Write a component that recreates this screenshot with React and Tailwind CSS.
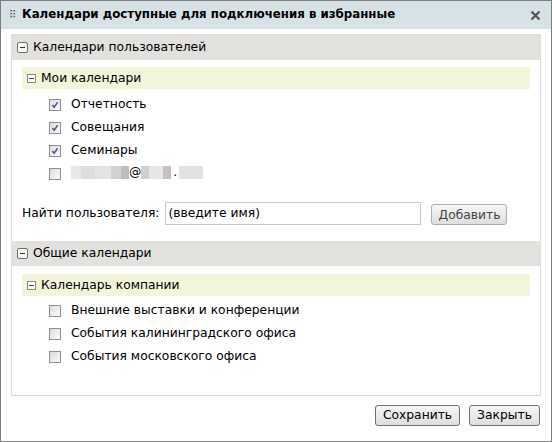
import React from "react";

const font = { fontFamily: '"DejaVu Sans", Verdana, sans-serif' };

const Minus = ({ big }) => (
  <span
    className={
      big
        ? "inline-flex items-center justify-center w-[11px] h-[11px] border border-[#6f6f6f] rounded-[2px] bg-[#f7f7f7] shrink-0"
        : "inline-flex items-center justify-center w-[9px] h-[9px] border border-[#8a8a8a] bg-white shrink-0"
    }
  >
    <span className={big ? "block w-[5px] h-px bg-[#333]" : "block w-[5px] h-px bg-[#444]"} />
  </span>
);

const Check = ({ checked }) => (
  <span className="inline-flex items-center justify-center w-[12px] h-[12px] border border-[#8e8f8f] bg-gradient-to-br from-[#dcdcdc] to-[#fbfbfb] shrink-0">
    {checked && (
      <svg width="8" height="8" viewBox="0 0 9 9">
        <path d="M1.5 4.5 L3.5 7 L7.5 1.5" fill="none" stroke="#4a5d9f" strokeWidth="1.8" />
      </svg>
    )}
  </span>
);

const Row = ({ checked, children }) => (
  <div className="flex items-center h-[23px] pl-[37px] gap-[10px]">
    <Check checked={checked} />
    <span className="text-[12.3px] text-black">{children}</span>
  </div>
);

const Blur = ({ w, c }) => <span className={"inline-block h-[13px] " + c} style={{ width: w }} />;

const Btn = ({ children, dim, w }) => (
  <button
    className={
      "h-[21px] rounded-[3px] border text-[12.3px] bg-gradient-to-b from-[#f6f6f6] to-[#dedede] " +
      (dim ? "border-[#adadad] text-[#444]" : "border-[#707070] text-black")
    }
    style={{ width: w, ...font }}
  >
    {children}
  </button>
);

export default function App() {
  return (
    <div style={font} className="w-[552px] h-[442px] border border-[#7d7d7d] bg-white flex flex-col">
      <div className="h-[28px] bg-[#d7e2e7] flex items-center pl-[8px] pr-[10px] shrink-0">
        <span className="text-[10px] text-[#555] leading-none tracking-[-1px] w-[13px]">⠿</span>
        <span className="font-bold text-[11.8px] text-black">Календари доступные для подключения в избранные</span>
        <span className="ml-auto">
          <svg width="11" height="11" viewBox="0 0 11 11">
            <path d="M1.5 1.5 L9.5 9.5 M9.5 1.5 L1.5 9.5" stroke="#555" strokeWidth="2.2" />
          </svg>
        </span>
      </div>
      <div className="mx-[10px] mt-[5px] h-[362px] border border-[#dcdcdc] flex flex-col">
        <div className="h-[25px] bg-[#e3e1de] flex items-center pl-[5px] gap-[5px]">
          <Minus big />
          <span className="text-[12.3px] text-black">Календари пользователей</span>
        </div>
        <div className="mx-[10px] mt-[7px] h-[22px] bg-[#f2f5dc] flex items-center pl-[5px] gap-[5px]">
          <Minus />
          <span className="text-[12.3px] text-black">Мои календари</span>
        </div>
        <div className="mt-[4px]">
          <Row checked>Отчетность</Row>
          <Row checked>Совещания</Row>
          <Row checked>Семинары</Row>
          <Row>
            <span className="inline-flex items-center">
              <Blur w={10} c="bg-[#e8e8e8]" />
              <Blur w={14} c="bg-[#dddddd]" />
              <Blur w={16} c="bg-[#e4e4e4]" />
              <Blur w={10} c="bg-[#d2d2d2]" />
              <Blur w={8} c="bg-[#bdbdbd]" />
              <span className="text-[12.3px]">@</span>
              <Blur w={8} c="bg-[#d0d0d0]" />
              <Blur w={14} c="bg-[#e6e6e6]" />
              <Blur w={8} c="bg-[#c7c0c0]" />
              <span className="text-[12.3px] mx-[2px]">.</span>
              <Blur w={24} c="bg-[#e2e2e2]" />
            </span>
          </Row>
        </div>
        <div className="flex items-center mt-[17px] pl-[10px] h-[23px]">
          <span className="text-[12.3px] text-black">Найти пользователя:</span>
          <div className="ml-[6px] w-[256px] h-[23px] border border-[#c8c8c8] flex items-center pl-[2px] text-[12.3px] text-black">
            (введите имя)
          </div>
          <div className="ml-[10px]">
            <Btn dim w={76}>Добавить</Btn>
          </div>
        </div>
        <div className="mt-[16px] h-[25px] bg-[#e3e1de] flex items-center pl-[5px] gap-[5px]">
          <Minus big />
          <span className="text-[12.3px] text-black">Общие календари</span>
        </div>
        <div className="mx-[10px] mt-[8px] h-[22px] bg-[#f2f5dc] flex items-center pl-[5px] gap-[5px]">
          <Minus />
          <span className="text-[12.3px] text-black">Календарь компании</span>
        </div>
        <div className="mt-[3px]">
          <Row>Внешние выставки и конференции</Row>
          <Row>События калининградского офиса</Row>
          <Row>События московского офиса</Row>
        </div>
      </div>
      <div className="flex justify-end gap-[9px] mt-[9px] pr-[11px]">
        <Btn w={85}>Сохранить</Btn>
        <Btn w={71}>Закрыть</Btn>
      </div>
    </div>
  );
}
